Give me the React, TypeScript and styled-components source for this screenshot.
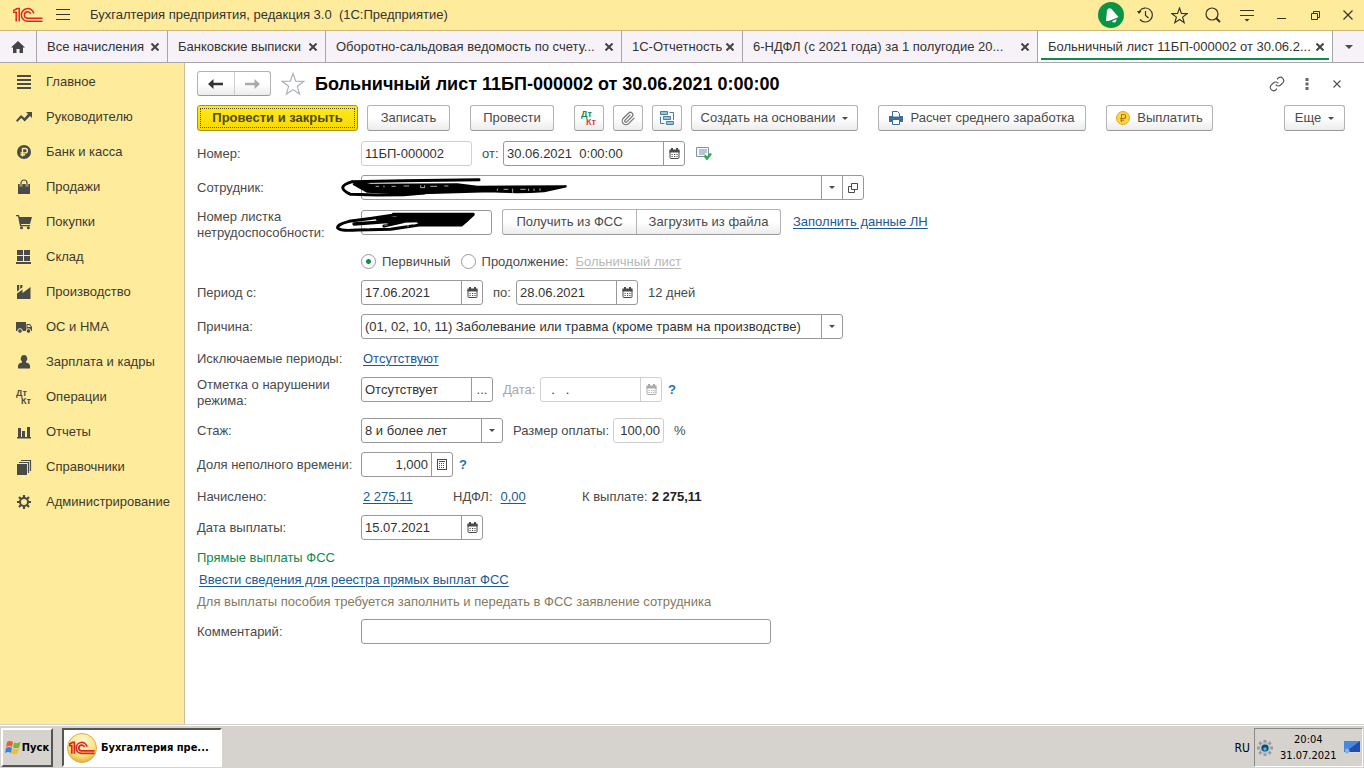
import React from 'react';
import styled, { createGlobalStyle, css } from 'styled-components';

const GlobalStyle = createGlobalStyle`
  *, *::before, *::after { box-sizing: border-box; }
  body { margin: 0; background: #fff; }
  body, button, input, select {
    font-family: "Liberation Sans", Arial, sans-serif;
    font-size: 13px;
    line-height: 16px;
    color: #4a4a4a;
  }
  button { padding: 0; border: 0; background: none; white-space: nowrap; }
  svg { display: block; flex: none; }
`;

const YELLOW = '#ffeb9c';
const LINE = '#a6a6a6';
const INK = '#4a4a46';

/* ---------- shell ---------- */

const Page = styled.div`
  display: flex;
  flex-direction: column;
  min-height: 100vh;
`;

const TitleBar = styled.header`
  display: flex;
  align-items: center;
  height: 31px;
  padding-left: 13px;
  background: ${YELLOW};
  border-bottom: 1px solid #c9b878;
`;

const AppTitle = styled.span`
  flex: 1;
  padding-left: 7px;
  font-size: 13px;
  color: #333;
  white-space: pre;
`;

const BarButton = styled.button<{ $w?: number }>`
  display: flex;
  align-items: center;
  justify-content: center;
  width: ${p => p.$w ?? 34}px;
  height: 28px;
  color: #333;
`;

const TabBar = styled.nav`
  display: flex;
  height: 32px;
  background: #f6f2f7;
  border-bottom: 1px solid ${LINE};
`;

const HomeTab = styled.button`
  display: flex;
  align-items: center;
  justify-content: center;
  width: 37px;
  border-right: 1px solid ${LINE};
`;

const Tab = styled.div<{ $w: number; $active?: boolean }>`
  display: flex;
  align-items: center;
  justify-content: space-between;
  flex: 0 1 ${p => p.$w}px;
  min-width: 0;
  padding: 0 6px 0 10px;
  border-right: 1px solid ${LINE};
  ${p => p.$active && css`
    background: linear-gradient(#0b8f4d, #0b8f4d) 3px 27px / calc(100% - 6px) 2px no-repeat #fff;
  `}
`;

const TabLabel = styled.button`
  overflow: hidden;
  text-overflow: ellipsis;
  color: #333;
`;

const TabClose = styled.button`
  display: flex;
  padding: 2px;
`;

const TabMenu = styled.button`
  display: flex;
  flex: 1;
  align-items: center;
  justify-content: center;
`;

const Body = styled.div`
  display: flex;
  flex: 1;
`;

const Sidebar = styled.nav`
  width: 185px;
  flex: none;
  padding-top: 1px;
  background: ${YELLOW};
  border-right: 1px solid #c9c0a0;
`;

const SideLink = styled.a`
  display: flex;
  align-items: center;
  gap: 14px;
  height: 35px;
  padding-left: 16px;
  color: #3d3a30;
  text-decoration: none;
  white-space: nowrap;
`;

/* ---------- form ---------- */

const Form = styled.main`
  flex: 1;
  min-width: 0;
  padding: 8px 19px 0 12px;
`;

const FormHeader = styled.div`
  display: flex;
  align-items: center;
  height: 25px;
`;

const HeaderTools = styled.div`
  display: flex;
  gap: 14px;
`;

const outlined = css`
  border: 1px solid #b3b3b3;
  border-bottom-color: #999;
  border-radius: 3px;
  background: linear-gradient(#fff 50%, #ececec);
`;

const NavPair = styled.div`
  display: flex;
  width: 74px;
  height: 25px;
  ${outlined}
`;

const NavButton = styled.button`
  display: flex;
  flex: 1;
  align-items: center;
  justify-content: center;
  & + & { border-left: 1px solid #d0d0d0; }
`;

const FavButton = styled.button`
  margin: 0 10px;
`;

const Heading = styled.h1`
  flex: 1;
  margin: 0;
  font-size: 18px;
  line-height: 24px;
  font-weight: 700;
  color: #000;
  white-space: nowrap;
`;

const Toolbar = styled.div`
  display: flex;
  gap: 20px;
  margin: 9px 0 10px;
`;

const ToolGroup = styled.div<{ $end?: boolean }>`
  display: flex;
  gap: 9px;
  ${p => p.$end && 'margin-left: auto;'}
`;

const ToolButton = styled.button<{ $w: number }>`
  display: flex;
  align-items: center;
  justify-content: center;
  gap: 7px;
  width: ${p => p.$w}px;
  height: 26px;
  color: #4a4a4a;
  ${outlined}
`;

const PrimaryButton = styled(ToolButton)`
  border-color: #a89410;
  background: linear-gradient(#ffe922, #f8d800);
  font-weight: 700;
  color: #4f4a20;
  outline: 1px dotted #4f4a20;
  outline-offset: -4px;
`;

const ButtonPair = styled.div`
  display: flex;
  height: 26px;
  ${outlined}
`;

const PairButton = styled.button<{ $w: number }>`
  width: ${p => p.$w}px;
  & + & { border-left: 1px solid #b3b3b3; }
`;

const Fields = styled.form`
  display: flex;
  flex-direction: column;
  gap: 9px;
`;

const Row = styled.div<{ $h?: number; $top?: boolean }>`
  display: flex;
  align-items: ${p => (p.$top ? 'flex-start' : 'center')};
  min-height: ${p => p.$h ?? 25}px;
`;

const TextRow = styled(Row)`
  padding-top: 2px;
`;

const Label = styled.label`
  width: 164px;
  flex: none;
  padding-right: 6px;
`;

const Cells = styled.div<{ $gap?: number }>`
  display: flex;
  align-items: center;
  gap: ${p => p.$gap ?? 10}px;
  min-width: 0;
  white-space: nowrap;
`;

const Pair = styled.div<{ $gap?: number; $w?: number }>`
  display: flex;
  align-items: center;
  gap: ${p => p.$gap ?? 6}px;
  ${p => p.$w && `width: ${p.$w}px;`}
`;

const Inline = styled.label<{ $muted?: boolean; $w?: number }>`
  color: ${p => (p.$muted ? '#a8a8a8' : 'inherit')};
  ${p => p.$w && `width: ${p.$w}px;`}
`;

const Box = styled.div<{ $w: number; $dim?: boolean }>`
  position: relative;
  display: flex;
  width: ${p => p.$w}px;
  height: 25px;
  background: #fff;
  border: 1px solid ${p => (p.$dim ? '#d0d0d0' : '#999')};
  border-radius: 3px;
`;

const Input = styled.input<{ $right?: boolean }>`
  flex: 1;
  min-width: 0;
  padding: 0 3px;
  border: 0;
  outline: 0;
  background: none;
  color: #333;
  text-align: ${p => (p.$right ? 'right' : 'left')};
`;

const BoxButton = styled.button<{ $dim?: boolean }>`
  display: flex;
  align-items: center;
  justify-content: center;
  width: 21px;
  border-left: 1px solid ${p => (p.$dim ? '#d0d0d0' : '#999')};
  color: ${p => (p.$dim ? '#aaa' : '#4a4a4a')};
`;

const SelectBox = styled(Box)`
  display: grid;
  & > * { grid-area: 1 / 1; }
`;

const Select = styled.select`
  appearance: none;
  width: 100%;
  padding: 0 24px 0 3px;
  border: 0;
  outline: 0;
  background: none;
  color: #333;
`;

const SelectMark = styled.span`
  display: flex;
  align-items: center;
  justify-content: center;
  justify-self: end;
  width: 21px;
  border-left: 1px solid #999;
  pointer-events: none;
`;

const Radio = styled.input`
  appearance: none;
  width: 15px;
  height: 15px;
  margin: 0;
  border: 1px solid #999;
  border-radius: 50%;
  background: #fff;
  &:checked { background: radial-gradient(circle, #0b8f4d 0 2px, #fff 3px); }
`;

const Link = styled.a<{ $muted?: boolean }>`
  color: ${p => (p.$muted ? '#b8b8b8' : '#1c5a96')};
  text-decoration: underline;
  text-underline-offset: 2px;
  white-space: nowrap;
`;

const Help = styled.button`
  color: #1a73b0;
  font-weight: 700;
`;

const Notes = styled.div`
  display: flex;
  flex-direction: column;
  align-items: flex-start;
  gap: 6px;
  padding-top: 1px;
`;

const NoteLink = styled(Link)`
  margin-left: 2px;
`;

const Note = styled.span<{ $green?: boolean }>`
  color: ${p => (p.$green ? '#0f8a4b' : '#857a5e')};
`;

const Total = styled.b`
  color: #222;
`;

const Ink = styled.svg`
  position: absolute;
  left: -29px;
  top: -6px;
  pointer-events: none;
`;

/* ---------- taskbar ---------- */

const TaskBar = styled.footer`
  display: flex;
  align-items: stretch;
  height: 44px;
  padding: 3px 1px 1px;
  background: #d6d2cd;
  border-top: 1px solid #d6d2cd;
  box-shadow: inset 0 1px #fff;
`;

const taskFont = css`
  font-family: "DejaVu Sans Condensed", "DejaVu Sans", sans-serif;
  font-size: 11px;
  color: #000;
`;

const StartButton = styled.button`
  display: flex;
  align-items: center;
  justify-content: center;
  gap: 1px;
  width: 52px;
  margin-right: 9px;
  border: 2px solid;
  border-color: #fff #555 #555 #fff;
  ${taskFont}
  font-weight: 700;
`;

const TaskButton = styled.button`
  display: flex;
  align-items: center;
  gap: 4px;
  width: 160px;
  padding-left: 3px;
  border: 2px solid;
  border-color: #555 #fff #fff #555;
  background: #fff;
  ${taskFont}
  font-weight: 700;
`;

const Lang = styled.span`
  align-self: center;
  margin: 0 4px 0 auto;
  ${taskFont}
  font-size: 12px;
`;

const Tray = styled.div`
  display: flex;
  align-items: center;
  gap: 7px;
  width: 109px;
  padding-left: 2px;
  border: 1px solid;
  border-color: #888 #fff #fff #888;
`;

const Clock = styled.time`
  ${taskFont}
  text-align: center;
`;

/* ---------- icons ---------- */

const LogoMark = ({ w = 30, h = 16, sw = 1.5 }: { w?: number; h?: number; sw?: number }) => (
  <svg width={w} height={h} viewBox="0 0 30 16" fill="none" stroke="#d8291c" strokeWidth={sw}>
    <path d="M0 5.200H3.200V14.500M0 3.800L4.200 1.500H6.200V14.500" />
    <path d="M20.800 6.500A6.300 6.300 0 1 0 14.500 14.200H29.500" />
    <path d="M17.800 7A3.300 3.300 0 1 0 14.500 11.300H29.500" />
  </svg>
);

const Cross = ({ s = 8, c = '#444', w = 2 }: { s?: number; c?: string; w?: number }) => (
  <svg width={s} height={s} viewBox={`0 0 ${s} ${s}`} stroke={c} strokeWidth={w}>
    <path d={`M0.500 0.500L${s - 0.5} ${s - 0.5}M${s - 0.5} 0.500L0.500 ${s - 0.5}`} />
  </svg>
);

const Caret = ({ s = 6 }: { s?: number }) => (
  <svg width={s} height={s / 2} viewBox="0 0 6 3" fill="#4a4a4a"><path d="M0 0h6L3 3z" /></svg>
);

const Calendar = () => (
  <svg width="11" height="11" viewBox="0 0 11 11">
    <path d="M1 2.500V9.500Q1 10.500 2 10.500H9Q10 10.500 10 9.500V2.500" fill="none" stroke="currentColor" />
    <path d="M.5 1.500h10v3H.5zM2 0h2v2H2zM7 0h2v2H7z" fill="currentColor" />
    <path d="M2.500 6h1.200v1H2.500zM5 6h1.200v1H5zM7.400 6h1.200v1H7.400zM2.500 8h1.200v1H2.500zM5 8h1.200v1H5zM7.400 8h1.200v1H7.400z" fill="currentColor" />
  </svg>
);

const Calculator = () => (
  <svg width="10" height="11" viewBox="0 0 10 11" fill="none" stroke="currentColor">
    <rect x=".5" y=".5" width="9" height="10" />
    <path d="M2 2.500h6M2 4.500h1m1 0h1m1 0h1M2 6.500h1m1 0h1m1 0h1M2 8.500h1m1 0h1m1 0h1" />
  </svg>
);

const OpenIcon = () => (
  <svg width="10" height="10" viewBox="0 0 10 10" fill="none" stroke="currentColor">
    <path d="M3.500.5h6v6h-6zM3.500 3.500h-3v6h6v-3" />
  </svg>
);

const Star = ({ s, c }: { s: number; c: string }) => (
  <svg width={s} height={s} viewBox="0 0 24 24" fill="none" stroke={c} strokeWidth={28 / s}>
    <path d="M12 1.500l2.700 7.600 8 .3-6.300 4.900 2.200 7.800L12 17.600l-6.600 4.500 2.200-7.800L1.300 9.400l8-.3z" />
  </svg>
);

const Arrow = ({ flip, c }: { flip?: boolean; c: string }) => (
  <svg width="15" height="10" viewBox="0 0 15 10" fill={c}>
    <path d={flip ? 'M15 5L9.500 0v3.700H0v2.600h9.500V10z' : 'M0 5l5.500-5v3.700H15v2.600H5.500V10z'} />
  </svg>
);

const DtKt = ({ a, b, s = 16 }: { a: string; b: string; s?: number }) => (
  <svg width={s} height={s} viewBox="0 0 16 16" fontFamily="Liberation Sans, sans-serif" fontWeight="700" fontSize="9">
    <text x="0" y="7" fill={a}>Дт</text>
    <text x="5" y="15" fill={b}>Кт</text>
  </svg>
);

const Coin = () => (
  <svg width="14" height="14" viewBox="0 0 14 14">
    <circle cx="7" cy="7" r="6.500" fill="#fbd645" stroke="#e2a81e" />
    <path d="M5.500 11V3.500h2.200a2 2 0 0 1 0 4H4.200M4.200 9.200h4" fill="none" stroke="#b17a10" strokeWidth="1.100" />
  </svg>
);

const sideIcons: Record<string, React.ReactNode> = {
  menu: <path d="M1 1h14v2H1zM1 5h14v2H1zM1 9h14v2H1zM1 13h14v2H1z" />,
  trend: <path d="M0 11.500L5 6l3.500 3 3.500-4-2-2h6v6l-2-2-5.300 5.500L5.200 9 1.300 13z" />,
  rub: (
    <>
      <circle cx="8" cy="8" r="7" />
      <path d="M6.500 12.500v-8h2.700a2.200 2.200 0 0 1 0 4.400H4.500M4.500 10.700h4.700" fill="none" stroke={YELLOW} strokeWidth="1.400" />
    </>
  ),
  bag: (
    <>
      <path d="M2 5h12v10H2z" />
      <path d="M5 7.500V4a3 3 0 0 1 6 0v3.500" fill="none" stroke={YELLOW} strokeWidth="2.600" />
      <path d="M5 7.500V4a3 3 0 0 1 6 0v3.500" fill="none" stroke={INK} strokeWidth="1.200" />
    </>
  ),
  cart: (
    <>
      <path d="M0 1h3l.6 2H16l-2 7H5l.3 1H14v1.300H4L2 2.300H0z" />
      <circle cx="5.500" cy="13.800" r="1.500" /><circle cx="12.300" cy="13.800" r="1.500" />
    </>
  ),
  stock: <path d="M1 1h6v5H1zM8 1h6v5H8zM1 7h6v5H1zM8 7h6v5H8zM0 13h15v2H0z" />,
  factory: <path d="M1 15V9.500l5.500-4V9l8-6v12zM1 7.500V1h2.200v5zM4.200 5V1h2.200v2.500z" />,
  truck: (
    <>
      <path d="M0 3h10v9H0zM10.500 5H14l2 3v4h-5.500z" />
      <path d="M11.500 6h2l1.200 2h-3.200z" fill={YELLOW} />
      <circle cx="4" cy="12" r="2.300" stroke={YELLOW} /><circle cx="12.500" cy="12" r="2.300" stroke={YELLOW} />
    </>
  ),
  person: <path d="M8 1a3.300 3.500 0 0 1 2 6.300V8.500Q14 9 14 12v2.500H2V12Q2 9 6 8.500V7.300A3.300 3.500 0 0 1 8 1z" />,
  chart: <path d="M2 4h3v9H2zM6 7h3v6H6zM11 3h3v10h-3zM1 13h14v1.500H1z" />,
  books: (
    <>
      <path d="M1 5h10v11H1z" />
      <path d="M3 3.500h9.500V14M5 1.500h9.500V12" fill="none" stroke={INK} strokeWidth="1.200" />
    </>
  ),
  gear: (
    <>
      <circle cx="8" cy="8" r="4" fill="none" stroke={INK} strokeWidth="2" />
      <path d="M8 1v3M8 12v3M1 8h3M12 8h3M3 3l2 2M11 11l2 2M13 3l-2 2M5 11l-2 2" stroke={INK} strokeWidth="2.200" />
    </>
  ),
};

const SideIcon = ({ name }: { name: string }) =>
  name === 'dtkt' ? <DtKt a={INK} b={INK} /> : (
    <svg width="16" height="16" viewBox="0 0 16 16" fill={INK}>{sideIcons[name]}</svg>
  );

/* ---------- data ---------- */

const tabs = [
  { text: 'Все начисления', w: 131 },
  { text: 'Банковские выписки', w: 158 },
  { text: 'Оборотно-сальдовая ведомость по счету...', w: 296 },
  { text: '1С-Отчетность', w: 121 },
  { text: '6-НДФЛ (с 2021 года) за 1 полугодие 20...', w: 295 },
  { text: 'Больничный лист 11БП-000002 от 30.06.2...', w: 295, active: true },
];

const sections = [
  ['menu', 'Главное'],
  ['trend', 'Руководителю'],
  ['rub', 'Банк и касса'],
  ['bag', 'Продажи'],
  ['cart', 'Покупки'],
  ['stock', 'Склад'],
  ['factory', 'Производство'],
  ['truck', 'ОС и НМА'],
  ['person', 'Зарплата и кадры'],
  ['dtkt', 'Операции'],
  ['chart', 'Отчеты'],
  ['books', 'Справочники'],
  ['gear', 'Администрирование'],
];

const DateField = ({ id, value, w = 122, dim }: { id: string; value: string; w?: number; dim?: boolean }) => (
  <Box $w={w} $dim={dim}>
    <Input id={id} defaultValue={value} disabled={dim} />
    <BoxButton type="button" $dim={dim} aria-label="Календарь"><Calendar /></BoxButton>
  </Box>
);

const SelectField = ({ id, value, w }: { id: string; value: string; w: number }) => (
  <SelectBox $w={w}>
    <Select id={id}><option>{value}</option></Select>
    <SelectMark><Caret /></SelectMark>
  </SelectBox>
);

export default function App() {
  return (
    <Page>
      <GlobalStyle />
      <TitleBar>
        <LogoMark />
        <BarButton $w={40} aria-label="Меню">
          <svg width="14" height="12" viewBox="0 0 14 12" stroke="#333"><path d="M0 .5h14M0 5.500h14M0 10.500h14" /></svg>
        </BarButton>
        <AppTitle>{'Бухгалтерия предприятия, редакция 3.0  (1С:Предприятие)'}</AppTitle>
        <BarButton aria-label="Уведомления">
          <svg width="26" height="26" viewBox="0 0 26 26">
            <circle cx="13" cy="13" r="13" fill="#0b9446" />
            <path d="M8 19L9 8.500Q10.500 5 13.500 7L20.500 15l-2 1L10.500 19z" fill="#fff" />
            <path d="M14 19.200l4.500-2q.3 2.700-1.700 3.200-2 .4-2.800-1.200z" fill="#fff" />
          </svg>
        </BarButton>
        <BarButton aria-label="История">
          <svg width="16" height="16" viewBox="0 0 16 16" fill="none" stroke="#333" strokeWidth="1.200">
            <path d="M2.600 4A7 7 0 1 1 3 12.500M8.500 4v4.500l3 2.500" /><path d="M0 4h4.500L2 7z" fill="#333" stroke="none" />
          </svg>
        </BarButton>
        <BarButton aria-label="Избранное"><Star s={17} c="#333" /></BarButton>
        <BarButton aria-label="Поиск">
          <svg width="16" height="16" viewBox="0 0 16 16" fill="none" stroke="#333" strokeWidth="1.200">
            <circle cx="7" cy="7" r="6" /><path d="M11 11l4 4" strokeWidth="2" />
          </svg>
        </BarButton>
        <BarButton aria-label="Настройки">
          <svg width="14" height="13" viewBox="0 0 14 13" stroke="#333" strokeWidth="1.200">
            <path d="M0 1.500h14M0 6.500h14" /><path d="M4.500 10h5L7 12.500z" fill="#333" stroke="none" />
          </svg>
        </BarButton>
        <BarButton aria-label="Свернуть">
          <svg width="9" height="10" viewBox="0 0 9 10" stroke="#333"><path d="M0 8.500h9" /></svg>
        </BarButton>
        <BarButton aria-label="Окно">
          <svg width="9" height="9" viewBox="0 0 9 9" fill="none" stroke="#333"><path d="M.5 2.500h6v6h-6zM2.500 2.500v-2h6v6h-2" /></svg>
        </BarButton>
        <BarButton $w={32} aria-label="Закрыть"><Cross s={10} w={1.2} c="#333" /></BarButton>
      </TitleBar>

      <TabBar>
        <HomeTab aria-label="Начальная страница">
          <svg width="14" height="12" viewBox="0 0 14 12" fill="#444"><path d="M7 0l7 6.500h-2V12H8.500V8h-3v4H2V6.500H0z" /></svg>
        </HomeTab>
        {tabs.map(t => (
          <Tab key={t.text} $w={t.w} $active={t.active}>
            <TabLabel>{t.text}</TabLabel>
            <TabClose aria-label="Закрыть вкладку"><Cross /></TabClose>
          </Tab>
        ))}
        <TabMenu aria-label="Список вкладок"><Caret s={8} /></TabMenu>
      </TabBar>

      <Body>
        <Sidebar>
          {sections.map(([icon, text]) => (
            <SideLink key={text} href="#"><SideIcon name={icon} />{text}</SideLink>
          ))}
        </Sidebar>

        <Form>
          <FormHeader>
            <NavPair>
              <NavButton aria-label="Назад"><Arrow c="#333" /></NavButton>
              <NavButton aria-label="Вперед"><Arrow flip c="#aaa" /></NavButton>
            </NavPair>
            <FavButton aria-label="В избранное"><Star s={24} c="#aab0b8" /></FavButton>
            <Heading>Больничный лист 11БП-000002 от 30.06.2021 0:00:00</Heading>
            <HeaderTools>
              <BarButton $w={16} aria-label="Ссылка">
                <svg width="16" height="16" viewBox="0 0 24 24" fill="none" stroke="#555" strokeWidth="1.700">
                  <path d="M10 13a5 5 0 0 0 7.500.5l3.500-3.500a5 5 0 0 0-7-7l-2 2M14 11a5 5 0 0 0-7.500-.5L3 14a5 5 0 0 0 7 7l2-2" />
                </svg>
              </BarButton>
              <BarButton $w={16} aria-label="Еще действия">
                <svg width="4" height="12" viewBox="0 0 4 12" fill="#666"><path d="M.5 0h3v3h-3zM.5 4.500h3v3h-3zM.5 9h3v3h-3z" /></svg>
              </BarButton>
              <BarButton $w={16} aria-label="Закрыть форму"><Cross s={8} w={1.2} c="#555" /></BarButton>
            </HeaderTools>
          </FormHeader>

          <Toolbar>
            <ToolGroup>
              <PrimaryButton $w={161}>Провести и закрыть</PrimaryButton>
              <ToolButton $w={83}>Записать</ToolButton>
            </ToolGroup>
            <ToolGroup><ToolButton $w={84}>Провести</ToolButton></ToolGroup>
            <ToolGroup>
              <ToolButton $w={30} aria-label="Проводки"><DtKt a="#0f8a4b" b="#d0404a" /></ToolButton>
              <ToolButton $w={30} aria-label="Файлы">
                <svg width="15" height="15" viewBox="0 0 24 24" fill="none" stroke="#777" strokeWidth="2">
                  <path d="M21.400 11l-9.200 9.200a6 6 0 0 1-8.500-8.500l8.600-8.500a4 4 0 0 1 5.600 5.700l-8.600 8.500a2 2 0 0 1-2.800-2.800l8.500-8.500" />
                </svg>
              </ToolButton>
              <ToolButton $w={30} aria-label="Структура подчиненности">
                <svg width="15" height="15" viewBox="0 0 15 15" fill="#9cc4dc" stroke="#4a7c9c">
                  <path d="M.5.5h7v3h-7zM3.500 5.500h7v3h-7zM6.500 10.500h7v3h-7z" />
                  <path d="M9.500 1.500h4v7.500M.5 5.500v7h4" fill="none" />
                </svg>
              </ToolButton>
              <ToolButton $w={167}>Создать на основании<Caret /></ToolButton>
            </ToolGroup>
            <ToolGroup>
              <ToolButton $w={208}>
                <svg width="14" height="14" viewBox="0 0 14 14">
                  <path d="M0 5h14v6H0z" fill="#3c6e98" />
                  <path d="M3.500.5h5l2 2V6h-7zM3.500 8.500h7v5h-7z" fill="#fff" stroke="#3c6e98" />
                </svg>
                Расчет среднего заработка
              </ToolButton>
            </ToolGroup>
            <ToolGroup><ToolButton $w={107}><Coin />Выплатить</ToolButton></ToolGroup>
            <ToolGroup $end><ToolButton $w={61}>Еще<Caret /></ToolButton></ToolGroup>
          </Toolbar>

          <Fields>
            <Row>
              <Label htmlFor="number">Номер:</Label>
              <Cells>
                <Box $w={111} $dim><Input id="number" defaultValue="11БП-000002" /></Box>
                <Pair>
                  <Inline htmlFor="date" $w={15}>от:</Inline>
                  <DateField id="date" value="30.06.2021  0:00:00" w={182} />
                </Pair>
                <Pair $w={20}>
                  <svg width="20" height="13" viewBox="0 0 20 13">
                    <path d="M3.500.5h12v9h-12z" fill="#f2f5f9" stroke="#8094a8" transform="translate(-2 0)" />
                    <path d="M4 3h8M4 5h8M4 7h6" stroke="#8094a8" />
                    <path d="M9.500 8.500l2.500 3 4-5" fill="none" stroke="#2bb04a" strokeWidth="2.600" />
                  </svg>
                </Pair>
              </Cells>
            </Row>
            <Row>
              <Label htmlFor="employee">Сотрудник:</Label>
              <Box $w={503}>
                <Input id="employee" />
                <BoxButton type="button" aria-label="Выбрать"><Caret /></BoxButton>
                <BoxButton type="button" aria-label="Открыть"><OpenIcon /></BoxButton>
                <Ink width="240" height="33" viewBox="427 -1 720 99" fill="none" stroke="#000" strokeLinecap="round" strokeLinejoin="round">
                  <path d="M485 34L640 31 865 28" strokeWidth="9" />
                  <path d="M485 34Q430 50 480 72L560 74 640 73 700 68" strokeWidth="9" />
                  <path d="M500 36L540 44 800 42 860 50 1125 48 1060 62Q980 68 900 62L640 70 530 64 490 42z" fill="#000" strokeWidth="7" />
                  <path d="M556 48h8M580 47v3M604 48h10M640 47h14M690 46v6h12v-6M720 48h18M762 47h10M920 56v4M940 57h12M966 56v10M990 57h14M1014 56v5M1030 56v5M1048 55v5" stroke="#fff" strokeWidth="2" />
                </Ink>
              </Box>
            </Row>
            <Row $h={32} $top>
              <Label htmlFor="sheet">Номер листка нетрудоспособности:</Label>
              <Cells>
                <Box $w={131}>
                  <Input id="sheet" />
                  <Ink width="150" height="33" viewBox="427 103 450 99" fill="none" stroke="#000" strokeLinecap="round" strokeLinejoin="round">
                    <path d="M610 133Q540 144 475 152 438 162 441 172 450 182 500 178L600 176 690 162" strokeWidth="9" />
                    <path d="M490 160L600 152 690 150M560 145L700 140M580 166L650 150" strokeWidth="10" />
                    <path d="M608 131L848 131 830 148 812 163 690 163 680 148 640 140z" fill="#000" strokeWidth="9" />
                    <path d="M532 166v8M548 164v6M566 163v5M582 163h8M652 160v8M668 160h6" stroke="#fff" strokeWidth="2" />
                  </Ink>
                </Box>
                <ButtonPair>
                  <PairButton type="button" $w={133}>Получить из ФСС</PairButton>
                  <PairButton type="button" $w={144}>Загрузить из файла</PairButton>
                </ButtonPair>
                <NoteLink href="#">Заполнить данные ЛН</NoteLink>
              </Cells>
            </Row>
            <TextRow $h={21}>
              <Label as="span" />
              <Cells>
                <Pair>
                  <Radio type="radio" name="kind" id="first" defaultChecked />
                  <Inline htmlFor="first">Первичный</Inline>
                </Pair>
                <Pair>
                  <Radio type="radio" name="kind" id="next" />
                  <Inline htmlFor="next" $w={84}>Продолжение:</Inline>
                </Pair>
                <Link href="#" $muted>Больничный лист</Link>
              </Cells>
            </TextRow>
            <Row>
              <Label htmlFor="from">Период с:</Label>
              <Cells>
                <DateField id="from" value="17.06.2021" />
                <Pair>
                  <Inline htmlFor="to" $w={17}>по:</Inline>
                  <DateField id="to" value="28.06.2021" />
                </Pair>
                <span>12 дней</span>
              </Cells>
            </Row>
            <Row>
              <Label htmlFor="reason">Причина:</Label>
              <SelectField id="reason" w={482} value="(01, 02, 10, 11) Заболевание или травма (кроме травм на производстве)" />
            </Row>
            <TextRow $h={20}>
              <Label as="span">Исключаемые периоды:</Label>
              <NoteLink href="#">Отсутствуют</NoteLink>
            </TextRow>
            <Row $h={32} $top>
              <Label htmlFor="violation">Отметка о нарушении режима:</Label>
              <Cells>
                <Box $w={132}>
                  <Input id="violation" defaultValue="Отсутствует" />
                  <BoxButton type="button">...</BoxButton>
                </Box>
                <Pair>
                  <Inline htmlFor="vdate" $muted $w={31}>Дата:</Inline>
                  <DateField id="vdate" value="  .   ." dim />
                  <Help type="button">?</Help>
                </Pair>
              </Cells>
            </Row>
            <Row>
              <Label htmlFor="seniority">Стаж:</Label>
              <Cells>
                <SelectField id="seniority" w={142} value="8 и более лет" />
                <Pair>
                  <Inline htmlFor="rate" $w={94}>Размер оплаты:</Inline>
                  <Box $w={51} $dim><Input id="rate" $right defaultValue="100,00" /></Box>
                </Pair>
                <span>%</span>
              </Cells>
            </Row>
            <Row>
              <Label htmlFor="share">Доля неполного времени:</Label>
              <Pair>
                <Box $w={92}>
                  <Input id="share" $right defaultValue="1,000" />
                  <BoxButton type="button" aria-label="Калькулятор"><Calculator /></BoxButton>
                </Box>
                <Help type="button">?</Help>
              </Pair>
            </Row>
            <TextRow $h={20}>
              <Label as="span">Начислено:</Label>
              <Pair $w={92}><NoteLink href="#">2 275,11</NoteLink></Pair>
              <Pair $gap={8} $w={129}><span>НДФЛ:</span><Link href="#">0,00</Link></Pair>
              <Pair $gap={4}><span>К выплате:</span><Total>2 275,11</Total></Pair>
            </TextRow>
            <Row>
              <Label htmlFor="paydate">Дата выплаты:</Label>
              <DateField id="paydate" value="15.07.2021" />
            </Row>
            <Notes>
              <Note $green>Прямые выплаты ФСС</Note>
              <NoteLink href="#">Ввести сведения для реестра прямых выплат ФСС</NoteLink>
              <Note>Для выплаты пособия требуется заполнить и передать в ФСС заявление сотрудника</Note>
            </Notes>
            <Row>
              <Label htmlFor="comment">Комментарий:</Label>
              <Box $w={410}><Input id="comment" /></Box>
            </Row>
          </Fields>
        </Form>
      </Body>

      <TaskBar>
        <StartButton>
          <svg width="16" height="15" viewBox="0 0 16 15">
            <path d="M2 2Q5 0 8 2L7 7Q4 5 1 7z" fill="#e8612c" />
            <path d="M9 2.500Q12 4 15.500 2L14 7.500Q11 9 8 7.500z" fill="#7ab62e" />
            <path d="M1 8Q4 6 7 8L6 13Q3 11 0 13z" fill="#3b82d0" />
            <path d="M8 8.500Q11 10 14 8.500L12.500 13.500Q10 15 6.500 13.500z" fill="#f4c020" />
          </svg>
          Пуск
        </StartButton>
        <TaskButton>
          <svg width="30" height="30" viewBox="0 0 30 30">
            <defs>
              <radialGradient id="ball" cx=".5" cy=".3" r=".8">
                <stop offset="0" stopColor="#fffbe0" /><stop offset=".6" stopColor="#fbe07a" /><stop offset="1" stopColor="#d89a20" />
              </radialGradient>
            </defs>
            <circle cx="15" cy="15" r="14.500" fill="url(#ball)" stroke="#d8b050" />
            <svg x="2" y="8" width="26" height="14"><LogoMark w={26} h={14} sw={2} /></svg>
          </svg>
          Бухгалтерия пре...
        </TaskButton>
        <Lang>RU</Lang>
        <Tray>
          <svg width="16" height="16" viewBox="0 0 16 16">
            <path d="M8 0v16M0 8h16M2.300 2.300l11.400 11.400M13.700 2.300L2.300 13.700" stroke="#999" strokeWidth="3" />
            <circle cx="8" cy="8" r="5.500" fill="#b8c4cc" /><circle cx="8" cy="8" r="3.600" fill="#12466e" /><circle cx="8" cy="9" r="1.800" fill="#3fc0d8" />
          </svg>
          <Clock>20:04<br />31.07.2021</Clock>
          <svg width="16" height="13" viewBox="0 0 16 13">
            <path d="M0 0h16v11H0z" fill="#1f4fae" /><path d="M0 0h16L4 9H0z" fill="#4a88e0" /><path d="M0 11h16v1H0z" fill="#ddd" /><circle cx="3" cy="10" r="2.500" fill="#8ab4dc" />
          </svg>
        </Tray>
      </TaskBar>
    </Page>
  );
}
